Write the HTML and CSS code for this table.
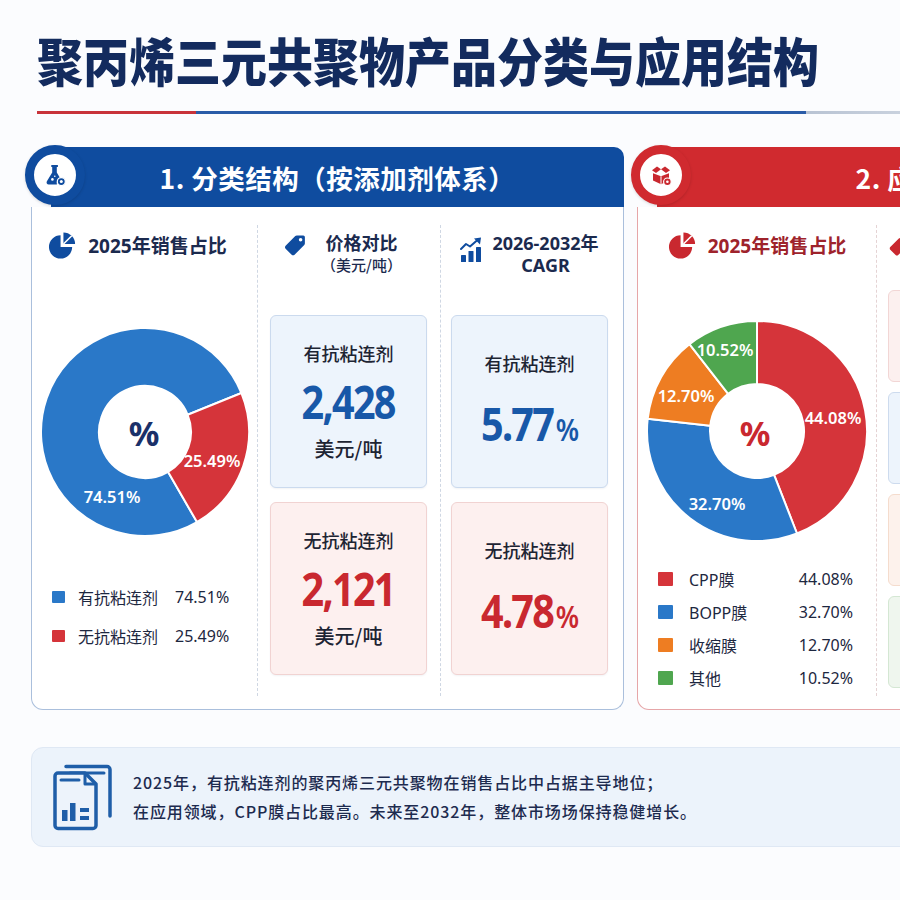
FILE: index.html
```html
<!DOCTYPE html>
<html lang="zh-CN">
<head>
<meta charset="utf-8">
<title>聚丙烯三元共聚物产品分类与应用结构</title>
<link rel="stylesheet" href="styles.css">
</head>
<body>
<div class="page">
  <header class="title-block">
    <h1 class="title">聚丙烯三元共聚物产品分类与应用结构</h1>
    <div class="title-rule"><span class="rule-red"></span><span class="rule-blue"></span><span class="rule-gray"></span></div>
  </header>

  <main class="panels">
    <!-- Panel 1 -->
    <section class="panel panel-blue">
      <div class="panel-badge badge-blue">
        <svg viewBox="0 0 24 24" width="24" height="24" aria-hidden="true">
          <path d="M8.3 2h6.6v2.1h-1.1v5.3l3.4 5.8a5.2 5.2 0 0 0-3.3 6.3H5.7c-1.7 0-2.7-1.8-1.8-3.2l5.3-8.9V4.1H8.3z" fill="#0f4c9f"/>
          <circle cx="9.4" cy="16.4" r="1.3" fill="#fff"/>
          <circle cx="11.8" cy="13.2" r="0.8" fill="#fff"/>
          <circle cx="18.3" cy="18.6" r="4" fill="#0f4c9f" stroke="#fff" stroke-width="1.2"/>
          <circle cx="18.3" cy="18.6" r="1.5" fill="#fff"/>
        </svg>
      </div>
      <div class="panel-head head-blue"><h2>1. 分类结构（按添加剂体系）</h2></div>
      <div class="panel-body body-blue grid-left">
        <div class="col col-share">
          <div class="col-head head-share">
            <svg class="ico-pie" viewBox="0 0 30 30" width="29" height="30" aria-hidden="true">
              <path d="M13 5A12 12 0 1 0 25 17H13Z" fill="#0f4c9f"/>
              <path d="M16 2A12 12 0 0 1 28 14H16Z" fill="#0f4c9f"/>
              <path d="M16 14L24.6 5.4" stroke="#fff" stroke-width="1.6"/>
            </svg>
            <span class="head-title">2025年销售占比</span>
          </div>
          <svg class="donut donut-left" viewBox="0 0 220 220" width="220" height="220">
            <path class="seg seg-blue" d="M162 200.07A104 104 0 1 1 206.43 71.04L152.65 92.77A46 46 0 1 0 133 149.84Z"/>
            <path class="seg seg-red" d="M206.43 71.04A104 104 0 0 1 162 200.07L133 149.84A46 46 0 0 0 152.65 92.77Z"/>
            <text class="donut-center center-navy" x="109" y="111">%</text>
            <text class="seg-label" x="177" y="138">25.49%</text>
            <text class="seg-label" x="77" y="174">74.51%</text>
          </svg>
          <ul class="legend legend-left">
            <li><i class="sw sw-blue"></i><span>有抗粘连剂</span><span class="val">74.51%</span></li>
            <li><i class="sw sw-red"></i><span>无抗粘连剂</span><span class="val">25.49%</span></li>
          </ul>
        </div>

        <div class="col col-cards col-price">
          <div class="col-head head-two">
            <svg class="ico-tag" viewBox="0 0 24 24" width="25" height="25" aria-hidden="true">
              <path d="M2.5 13.2L11.8 3.9c.4-.4.9-.6 1.4-.6h6.3c.8 0 1.5.7 1.5 1.5v6.3c0 .5-.2 1-.6 1.4l-9.3 9.3c-.8.8-2 .8-2.8 0l-5.8-5.8c-.8-.8-.8-2 0-2.8z" fill="#0f4c9f"/>
              <circle cx="16.9" cy="7.4" r="1.7" fill="#fff"/>
            </svg>
            <div class="head-text"><span class="ht-main">价格对比</span><span class="ht-sub">（美元/吨）</span></div>
          </div>
          <div class="card card-blue price">
            <span class="card-label">有抗粘连剂</span>
            <span class="num num-blue">2,428</span>
            <span class="unit">美元/吨</span>
          </div>
          <div class="card card-red price">
            <span class="card-label">无抗粘连剂</span>
            <span class="num num-red">2,121</span>
            <span class="unit">美元/吨</span>
          </div>
        </div>

        <div class="col col-cards col-cagr">
          <div class="col-head head-two">
            <svg class="ico-chart" viewBox="0 0 22 26" width="22" height="26" aria-hidden="true">
              <rect x="1" y="18" width="5" height="7" rx="0.6" fill="#0f4c9f"/>
              <rect x="8.5" y="14" width="5" height="11" rx="0.6" fill="#0f4c9f"/>
              <rect x="16" y="10" width="5" height="15" rx="0.6" fill="#0f4c9f"/>
              <polyline points="1,12 6,7 10,9.5 17.5,3" fill="none" stroke="#0f4c9f" stroke-width="2" stroke-linejoin="round" stroke-linecap="round"/>
              <polygon points="14,1.5 21,0.5 20,7.5" fill="#0f4c9f"/>
            </svg>
            <div class="head-text"><span class="ht-main">2026-2032年</span><span class="ht-main">CAGR</span></div>
          </div>
          <div class="card card-blue cagr">
            <span class="card-label">有抗粘连剂</span>
            <span class="num num-blue">5.77<small>%</small></span>
          </div>
          <div class="card card-red cagr">
            <span class="card-label">无抗粘连剂</span>
            <span class="num num-red">4.78<small>%</small></span>
          </div>
        </div>
      </div>
    </section>

    <!-- Panel 2 -->
    <section class="panel panel-red">
      <div class="panel-badge badge-red">
        <svg viewBox="0 0 24 24" width="24" height="24" aria-hidden="true">
          <path d="M3 7.2L8 3.4l4 2.9-5 3.7z" fill="#c9282f"/>
          <path d="M21 7.2L16 3.4l-4 2.9 5 3.7z" fill="#c9282f"/>
          <path d="M4 10.2l8 3.1 8-3.1v7.2l-8 3.8-8-3.8z" fill="#c9282f"/>
          <path d="M12 13.3v7.9" stroke="#fff" stroke-width="1"/>
          <circle cx="18.4" cy="18.8" r="3.8" fill="#c9282f" stroke="#fff" stroke-width="1.2"/>
          <circle cx="18.4" cy="18.8" r="1.3" fill="#fff"/>
        </svg>
      </div>
      <div class="panel-head head-red"><h2>2. 应用结构（按下游应用领域）</h2></div>
      <div class="panel-body body-red grid-right">
        <div class="col col-share">
          <div class="col-head head-share">
            <svg class="ico-pie" viewBox="0 0 30 30" width="29" height="30" aria-hidden="true">
              <path d="M13 5A12 12 0 1 0 25 17H13Z" fill="#c9282f"/>
              <path d="M16 2A12 12 0 0 1 28 14H16Z" fill="#c9282f"/>
              <path d="M16 14L24.6 5.4" stroke="#fff" stroke-width="1.6"/>
            </svg>
            <span class="head-title title-red">2025年销售占比</span>
          </div>
          <svg class="donut donut-right" viewBox="0 0 230 230" width="230" height="230">
            <path class="seg seg-red" d="M115 5A110 110 0 0 1 154.97 217.49L132.08 158.79A47 47 0 0 0 115 68Z"/>
            <path class="seg seg-blue" d="M154.97 217.49A110 110 0 0 1 5.69 102.72L68.3 109.75A47 47 0 0 0 132.08 158.79Z"/>
            <path class="seg seg-orange" d="M5.69 102.72A110 110 0 0 1 47.48 28.15L86.15 77.89A47 47 0 0 0 68.3 109.75Z"/>
            <path class="seg seg-green" d="M47.48 28.15A110 110 0 0 1 115 5L115 68A47 47 0 0 0 86.15 77.89Z"/>
            <text class="donut-center center-red" x="113" y="117">%</text>
            <text class="seg-label" x="191" y="101">44.08%</text>
            <text class="seg-label" x="75" y="187">32.70%</text>
            <text class="seg-label" x="44" y="79">12.70%</text>
            <text class="seg-label" x="83" y="33">10.52%</text>
          </svg>
          <ul class="legend legend-right">
            <li><i class="sw sw-red"></i><span>CPP膜</span><span class="val">44.08%</span></li>
            <li><i class="sw sw-blue"></i><span>BOPP膜</span><span class="val">32.70%</span></li>
            <li><i class="sw sw-orange"></i><span>收缩膜</span><span class="val">12.70%</span></li>
            <li><i class="sw sw-green"></i><span>其他</span><span class="val">10.52%</span></li>
          </ul>
        </div>

        <div class="col col-cards col-app">
          <div class="col-head head-app">
            <svg class="ico-tag" viewBox="0 0 24 24" width="22" height="22" aria-hidden="true">
              <path d="M2.5 13.2L11.8 3.9c.4-.4.9-.6 1.4-.6h6.3c.8 0 1.5.7 1.5 1.5v6.3c0 .5-.2 1-.6 1.4l-9.3 9.3c-.8.8-2 .8-2.8 0l-5.8-5.8c-.8-.8-.8-2 0-2.8z" fill="#c9282f"/>
              <circle cx="16.9" cy="7.4" r="1.7" fill="#fff"/>
            </svg>
            <span class="head-title title-red">价格对比</span>
          </div>
          <div class="app-card app-red"><span class="card-label">CPP膜</span></div>
          <div class="app-card app-blue"><span class="card-label">BOPP膜</span></div>
          <div class="app-card app-orange"><span class="card-label">收缩膜</span></div>
          <div class="app-card app-green"><span class="card-label">其他</span></div>
        </div>
      </div>
    </section>
  </main>

  <aside class="note">
    <svg class="note-icon" viewBox="0 0 62 68" width="62" height="68" aria-hidden="true">
      <path d="M14 3.5h41a3 3 0 0 1 3 3V53" fill="none" stroke="#1f5ea8" stroke-width="3.5" stroke-linecap="round"/>
      <path d="M18 10h34" stroke="#1f5ea8" stroke-width="3" stroke-linecap="round"/>
      <path d="M6 10h27l11 11v41.5a3 3 0 0 1-3 3H6a3 3 0 0 1-3-3V13a3 3 0 0 1 3-3z" fill="#edf3fb" stroke="#1f5ea8" stroke-width="3.5" stroke-linejoin="round"/>
      <path d="M33 10v11h11" fill="none" stroke="#1f5ea8" stroke-width="3" stroke-linejoin="round"/>
      <path d="M9 17h18" stroke="#1f5ea8" stroke-width="3" stroke-linecap="round"/>
      <rect x="10" y="47" width="5.5" height="11" fill="#1f5ea8"/>
      <rect x="18" y="40" width="5.5" height="18" fill="#1f5ea8"/>
      <rect x="28" y="45" width="9" height="4" fill="#1f5ea8"/>
      <rect x="28" y="53" width="9" height="4" fill="#1f5ea8"/>
    </svg>
    <div class="note-text">
      <p>2025年，有抗粘连剂的聚丙烯三元共聚物在销售占比中占据主导地位；</p>
      <p>在应用领域，CPP膜占比最高。未来至2032年，整体市场场保持稳健增长。</p>
    </div>
  </aside>
</div>
</body>
</html>
```

FILE: styles.css
```css
html, body {
  margin: 0;
  padding: 0;
}

body {
  width: 900px;
  height: 900px;
  overflow: hidden;
  background: #fbfcfe;
  font-family: "Noto Sans", "Noto Sans CJK SC", sans-serif;
  color: #1b2745;
}

.page {
  width: 1420px;
  padding-left: 31px;
}

/* ---------- Title ---------- */
.title-block {
  padding-top: 29px;
  padding-left: 6px;
}

.title {
  margin: 0;
  font-family: "Noto Sans CJK SC", sans-serif;
  font-weight: 900;
  font-size: 46px;
  line-height: 60px;
  color: #132b5e;
  white-space: nowrap;
  transform: scaleY(1.13);
  transform-origin: left center;
}

.title-rule {
  display: flex;
  margin-top: 22px;
  height: 3px;
}

.rule-red {
  width: 159px;
  background: #c8333a;
}

.rule-blue {
  width: 610px;
  background: #2a5ca8;
}

.rule-gray {
  width: 320px;
  background: linear-gradient(90deg, #b8c3d3, rgba(200, 208, 220, 0.2));
}

/* ---------- Panels ---------- */
.panels {
  display: flex;
  gap: 13px;
  margin-top: 33px;
  align-items: flex-start;
}

.panel {
  position: relative;
  flex: none;
}

.panel-blue { width: 593px; }
.panel-red { width: 800px; }

.panel-head {
  height: 60px;
  margin-left: 20px;
  border-radius: 0 10px 0 0;
  display: flex;
  align-items: center;
  justify-content: center;
}

.panel-head h2 {
  margin: 0;
  font-family: "Noto Sans CJK SC", sans-serif;
  font-size: 26.5px;
  font-weight: 700;
  color: #fff;
  letter-spacing: 0.5px;
  white-space: nowrap;
}

.head-blue { background: #0f4c9f; }
.head-red { background: #d02a2f; }

.panel-badge {
  position: absolute;
  left: -6px;
  top: -2px;
  width: 60px;
  height: 60px;
  box-sizing: border-box;
  border-radius: 50%;
  background: #fff;
  display: flex;
  align-items: center;
  justify-content: center;
  z-index: 2;
  box-shadow: 0 1px 3px rgba(0, 0, 0, 0.15);
}

.badge-blue { border: 9px solid #0f4c9f; }
.badge-red { border: 9px solid #d02a2f; }

.panel-body {
  height: 503px;
  box-sizing: border-box;
  background: #fff;
  border-radius: 0 0 12px 12px;
  display: grid;
}

.body-blue { border: 1.5px solid #aabfdc; border-top: none; }
.body-red { border: 1.5px solid #e6a6a8; border-top: none; }

.grid-left { grid-template-columns: 225px 183px 1fr; }
.grid-right { grid-template-columns: 238px 1fr; }

.col {
  display: flex;
  flex-direction: column;
  min-width: 0;
}

.col-cards {
  margin: 18px 0 13px;
  border-left: 1.5px dashed #cfd7e3;
}

.body-red .col-cards { border-left-color: #e5d3d4; }

/* column headers */
.col-head {
  display: flex;
  justify-content: center;
  box-sizing: border-box;
}

.head-share {
  height: 76px;
  align-items: center;
  gap: 11px;
}

.grid-left .head-share { padding-right: 14px; }

.head-title {
  font-family: "Noto Sans", "Noto Sans CJK SC", sans-serif;
  font-size: 19px;
  font-weight: 700;
  color: #1b2a4e;
  white-space: nowrap;
}

.title-red { color: #9e232b; }

.head-two {
  height: 90px;
  padding-top: 7px;
  align-items: flex-start;
  gap: 13px;
}

.col-price .head-two { padding-right: 12px; }
.col-cagr .head-two { gap: 10px; }
.col-cagr .ico-chart { margin-top: 5px; }

.head-text {
  display: flex;
  flex-direction: column;
  align-items: center;
}

.ht-main {
  font-size: 18px;
  line-height: 22px;
  font-weight: 700;
  color: #1b2a4e;
  white-space: nowrap;
}

.ht-sub {
  font-family: "Noto Sans CJK SC", sans-serif;
  font-size: 15px;
  line-height: 22px;
  font-weight: 500;
  color: #1b2a4e;
}

/* donuts */
.donut {
  display: block;
  align-self: center;
}

.donut-left { margin-top: 39px; }
.donut-right { margin-top: 33px; }

.seg {
  stroke: #fff;
  stroke-width: 2;
  stroke-linejoin: round;
}

.seg-blue { fill: #2a78c8; }
.seg-red { fill: #d5343a; }
.seg-orange { fill: #ee7d22; }
.seg-green { fill: #4fa64f; }

.seg-label {
  fill: #fff;
  font-family: "Noto Sans", sans-serif;
  font-size: 16.5px;
  font-weight: 600;
  text-anchor: middle;
  dominant-baseline: central;
}

.donut-center {
  font-family: "Noto Sans", sans-serif;
  font-size: 34px;
  font-weight: 700;
  text-anchor: middle;
  dominant-baseline: central;
}

.center-navy { fill: #1a3069; }
.center-red { fill: #c9282f; }

/* legends */
.legend {
  list-style: none;
  margin: 0;
  padding: 0;
  display: flex;
  flex-direction: column;
  font-size: 16px;
  color: #1d2740;
}

.legend li {
  display: grid;
  align-items: center;
  height: 24px;
}

.legend-left {
  margin: 43px 0 0 20px;
  gap: 15px;
}

.legend-left li {
  grid-template-columns: 13px 84px auto;
  column-gap: 13px;
}

.legend-left .sw { height: 12px; }

.legend-right {
  margin: 21px 0 0 20px;
  width: 195px;
  gap: 9px;
}

.legend-right li {
  grid-template-columns: 15px 1fr auto;
  column-gap: 16px;
}

.legend-right .sw { height: 14px; }

.sw {
  display: block;
  border-radius: 1px;
}

.sw-blue { background: #2a78c8; }
.sw-red { background: #d5343a; }
.sw-orange { background: #ee7d22; }
.sw-green { background: #4fa64f; }

.legend .val {
  font-family: "Noto Sans", sans-serif;
}

/* cards */
.col-price { padding: 0 13px 0 12px; }
.col-cagr { padding: 0 15px 0 10px; }

.card {
  height: 173px;
  box-sizing: border-box;
  border-radius: 6px;
  display: flex;
  flex-direction: column;
  align-items: center;
  justify-content: center;
  box-shadow: 0 1px 2px rgba(30, 50, 90, 0.06);
}

.card + .card { margin-top: 14px; }

.card-blue {
  background: #edf4fc;
  border: 1px solid #cbdaee;
}

.card-red {
  background: #fdf0ef;
  border: 1px solid #f1d3d2;
}

.card-label {
  font-family: "Noto Sans CJK SC", sans-serif;
  font-size: 18px;
  line-height: 24px;
  font-weight: 500;
  color: #1d2433;
  white-space: nowrap;
}

.num {
  display: inline-block;
  font-family: "Noto Sans", sans-serif;
  font-size: 46px;
  line-height: 48px;
  font-weight: 700;
  letter-spacing: -2px;
  transform: scaleX(0.86);
}

.num small {
  font-size: 31px;
  font-weight: 600;
  letter-spacing: 0;
  margin-left: 3px;
}

.num-blue { color: #1858a8; }
.num-red { color: #c9282f; }

.price .num { margin-top: 12px; }

.unit {
  font-family: "Noto Sans CJK SC", sans-serif;
  font-size: 20px;
  line-height: 28px;
  font-weight: 500;
  color: #1d2433;
  margin-top: 10px;
}

.cagr .num { margin-top: 24px; }

/* right column app cards */
.col-app {
  padding: 0 14px 0 11px;
}

.head-app {
  height: 65px;
  padding-top: 10px;
  justify-content: flex-start;
  align-items: flex-start;
  gap: 12px;
}

.app-card {
  height: 92px;
  box-sizing: border-box;
  border-radius: 6px;
  display: flex;
  align-items: center;
  padding-left: 24px;
}

.app-card + .app-card { margin-top: 10px; }

.app-red { background: #fcf0ef; border: 1px solid #f2d6d5; }
.app-blue { background: #edf4fc; border: 1px solid #cddbee; }
.app-orange { background: #fdf2ec; border: 1px solid #f5dccd; }
.app-green { background: #eff6ee; border: 1px solid #d4e7d3; }

/* ---------- Note ---------- */
.note {
  margin-top: 37px;
  width: 1380px;
  height: 100px;
  box-sizing: border-box;
  background: #ecf3fb;
  border: 1px solid #dfe8f4;
  border-radius: 12px;
  display: flex;
  align-items: center;
  padding-left: 20px;
  gap: 19px;
}

.note-icon {
  flex: none;
  display: block;
}

.note-text p {
  margin: 0;
  font-family: "Noto Sans CJK SC", sans-serif;
  font-size: 16px;
  line-height: 29px;
  font-weight: 500;
  letter-spacing: 0.9px;
  color: #1d2b4f;
  white-space: nowrap;
}
```
